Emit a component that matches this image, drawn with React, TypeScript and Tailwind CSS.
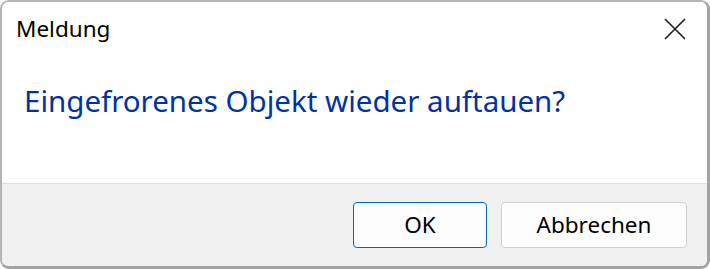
import React from 'react';

const App = () => {
  return (
    <div className="w-[710px] h-[269px] bg-white font-['Noto_Sans',sans-serif]">
      <div className="w-full h-full flex flex-col rounded-[9px] border-l-2 border-t-2 border-r-[3px] border-b-[3px] border-l-[#b4b4b4] border-t-[#b4b4b4] border-r-[#a3a3a3] border-b-[#a3a3a3] overflow-hidden">
        {/* Titelleiste + Meldungstext */}
        <div className="flex items-start justify-between h-[181px] bg-white">
          <div className="flex flex-col">
            <div className="pl-[14px] pt-[12px] text-[22.5px] leading-[30px] text-black">Meldung</div>
            <div className="pl-[22px] pt-[37px] text-[29.5px] leading-[40px] text-[#0033a0]">
              Eingefrorenes Objekt wieder auftauen?
            </div>
          </div>
          <button className="mt-[15px] mr-[20px] w-[24px] h-[24px] flex items-center justify-center">
            <svg width="22" height="22" viewBox="0 0 22 22" fill="none" stroke="#1a1a1a" strokeWidth="1.6">
              <path d="M1 1 L21 21 M21 1 L1 21" />
            </svg>
          </button>
        </div>
        {/* Fußzeile */}
        <div className="flex-1 bg-[#f0f0f0] border-t border-[#dfdfdf] flex justify-end items-start pt-[18px] pr-[20px] gap-[14px]">
          <button className="w-[134px] h-[46px] rounded-[4px] border border-[#0067c0] bg-[#fdfdfd] text-[22.5px] leading-none text-black">
            OK
          </button>
          <button className="w-[186px] h-[46px] rounded-[4px] border border-[#d0d0d0] bg-[#fdfdfd] text-[22.5px] leading-none text-black">
            Abbrechen
          </button>
        </div>
      </div>
    </div>
  );
};

export default App;
